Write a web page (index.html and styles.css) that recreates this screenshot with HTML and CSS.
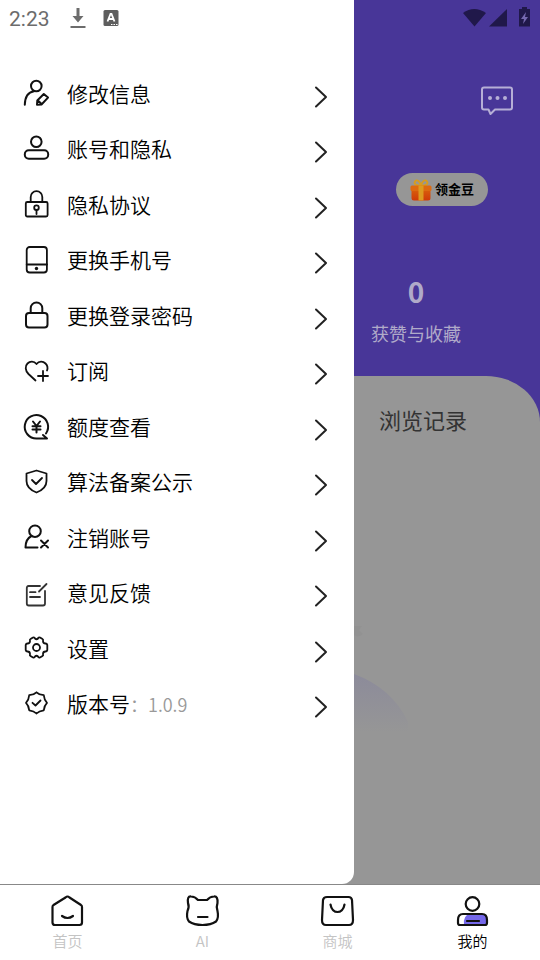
FILE: index.html
```html
<!DOCTYPE html>
<html lang="zh-CN">
<head>
<meta charset="utf-8">
<meta name="viewport" content="width=device-width, initial-scale=1">
<title>我的</title>
<link rel="stylesheet" href="styles.css">
</head>
<body>
<div class="stage">
  <main class="profile">
    <section class="hero">
      <div class="system">
        <svg width="70" height="22" viewBox="0 0 70 22" fill="#20184a"><path d="M0 5Q11-3 23 5L11.500 18.500Z"/><path d="M26 18.500L44 1V18.500Z"/><path d="M59-1h5v2h3v17.500H56V1h3Z"/><path d="M63 4l-5 7h3l-1 5 5-7h-3Z" fill="#7568b0"/></svg>
      </div>
      <button class="message" aria-label="消息">
        <svg width="32" height="30" viewBox="0 0 32 30" fill="none" stroke="#b6afd6" stroke-width="2" stroke-linejoin="round"><path d="M3 1.500H29Q31 1.500 31 3.500V21.500Q31 23.500 29 23.500H14L9.500 28 7.500 23.500H3Q1 23.500 1 21.500V3.500Q1 1.500 3 1.500Z"/><g fill="#b6afd6" stroke="none"><circle cx="9" cy="12" r="2"/><circle cx="16.500" cy="12" r="2"/><circle cx="24" cy="12" r="2"/></g></svg>
      </button>
      <button class="beans">
        <svg width="22" height="22" viewBox="0 0 22 22"><defs><linearGradient id="box" x2="0" y2="1"><stop stop-color="#d9600c"/><stop offset="1" stop-color="#cf3a08"/></linearGradient></defs><path d="M11 7C6 6.500 3.500 5 5 2.500S10 1.500 11 7C12 1.500 15.500 0 17 2.500S16 6.500 11 7" fill="none" stroke="#d99c1c" stroke-width="1.800"/><path d="M1.500 10H20.500V19Q20.500 21.500 18 21.500H4Q1.500 21.500 1.500 19Z" fill="url(#box)"/><rect x=".5" y="6.500" width="21" height="5.500" rx="1.500" fill="#dd6a10"/><path d="M8.500 6.500h5v15h-5Z" fill="#dc9a20"/></svg>
        <span>领金豆</span>
      </button>
      <div class="stat"><strong>0</strong><span>获赞与收藏</span></div>
    </section>
    <section class="sheet">
      <h2>浏览记录</h2>
      <svg class="art" width="56" height="106" viewBox="0 0 56 106"><defs><linearGradient id="hill" x2="0" y2="1"><stop stop-color="#8c8b9a"/><stop offset="1" stop-color="#969696"/></linearGradient></defs><path d="M0 0H8L5 4 9 8Q4 12 0 9Z" fill="#929292"/><path d="M0 48Q38 62 54 96V106H0Z" fill="url(#hill)"/></svg>
    </section>
  </main>

  <aside class="drawer">
    <div class="clock">
      <time>2:23</time>
      <svg width="16" height="22" viewBox="0 0 16 22" fill="#6c6c6c"><path d="M6.500 0h3v8h4L8 14.500 2.500 8h4Z"/><path d="M.5 18h15v2H.5Z"/></svg>
      <svg width="16" height="18" viewBox="0 0 16 18"><rect x=".5" y="0" width="15" height="16" rx="1.500" fill="#5e5e5e"/><path d="M4.500 11.500L7.500 4h1L11.500 11.500M5.500 9h5" fill="none" stroke="#fff" stroke-width="1.800"/><path d="M8 14.500h1.500M10.500 14.500H12M13 14.500h1.500" stroke="#fff"/></svg>
    </div>
    <nav class="menu">
      <a href="#edit"><svg class="icon" viewBox="0 0 30 30"><circle cx="15.300" cy="6" r="5.300"/><path d="M3.800 24.800C4 17 7.500 12 13 11.200M16 24.800L16.300 20.500 22.800 14 27 17.600 20.500 24.500ZM17 20.500l3.500 3.500"/></svg><span>修改信息</span><svg class="chevron" viewBox="0 0 14 22"><path d="M2 1.500L12 11 2 20.500"/></svg></a>
      <a href="#privacy"><svg class="icon" viewBox="0 0 30 30"><circle cx="15.300" cy="6.700" r="5.300"/><rect x="3.800" y="15.200" width="23.400" height="8.600" rx="4"/></svg><span>账号和隐私</span><svg class="chevron" viewBox="0 0 14 22"><path d="M2 1.500L12 11 2 20.500"/></svg></a>
      <a href="#agreement"><svg class="icon fine" viewBox="0 0 30 30"><rect x="4.800" y="11" width="21.800" height="14.500" rx="1.500"/><path d="M9.700 11V6a5.800 5.800 0 0 1 11.600 0V11M15.500 19v4"/><circle cx="15.500" cy="16.700" r="2.300"/></svg><span>隐私协议</span><svg class="chevron" viewBox="0 0 14 22"><path d="M2 1.500L12 11 2 20.500"/></svg></a>
      <a href="#phone"><svg class="icon fine" viewBox="0 0 30 30"><rect x="5.700" y="1" width="20.200" height="25.500" rx="3"/><path d="M5.700 18.500H26"/><circle cx="15.500" cy="22.500" r="1.700" class="solid"/></svg><span>更换手机号</span><svg class="chevron" viewBox="0 0 14 22"><path d="M2 1.500L12 11 2 20.500"/></svg></a>
      <a href="#password"><svg class="icon" viewBox="0 0 30 30"><rect x="5" y="11" width="21.500" height="14.500" rx="3"/><path d="M9.700 11V6.200a5.800 5.800 0 0 1 11.600 0V11"/></svg><span>更换登录密码</span><svg class="chevron" viewBox="0 0 14 22"><path d="M2 1.500L12 11 2 20.500"/></svg></a>
      <a href="#subscribe"><svg class="icon fine" viewBox="0 0 30 30"><path d="M14.500 23.500L7.500 17C4 13.500 4 9 6.500 6.500S13 4 15.500 7C18 4 22 4 24.500 6.500 26.500 8.500 27 11 26 13.500M22 14v10M17 19h10"/></svg><span>订阅</span><svg class="chevron" viewBox="0 0 14 22"><path d="M2 1.500L12 11 2 20.500"/></svg></a>
      <a href="#quota"><svg class="icon" viewBox="0 0 30 30"><path d="M25 20.500A11.700 11.700 0 1 0 15.500 25.500H26L22 22M12 8.500L15.500 13 19 8.500M15.500 13v6.500M11.500 13.200h8M11.500 16.500h8"/></svg><span>额度查看</span><svg class="chevron" viewBox="0 0 14 22"><path d="M2 1.500L12 11 2 20.500"/></svg></a>
      <a href="#algorithm"><svg class="icon fine" viewBox="0 0 30 30"><path d="M15.500 2.500L25.500 5.500V13C25.500 18 22 22 15.500 24.500 9 22 5.500 18 5.500 13V5.500ZM11 12l4 4 6-6"/></svg><span>算法备案公示</span><svg class="chevron" viewBox="0 0 14 22"><path d="M2 1.500L12 11 2 20.500"/></svg></a>
      <a href="#cancel"><svg class="icon" viewBox="0 0 30 30"><circle cx="14" cy="7.200" r="5.800"/><path d="M10.500 12C6.500 14 4.500 18 4.500 23.500H16.500M20 16.500l7 7M27 16.500l-7 7"/></svg><span>注销账号</span><svg class="chevron" viewBox="0 0 14 22"><path d="M2 1.500L12 11 2 20.500"/></svg></a>
      <a href="#feedback"><svg class="icon fine soft" viewBox="0 0 30 30"><path d="M19 7H7.500Q5.800 7 5.800 9V24.500Q5.800 26.500 7.800 26.500H22Q24 26.500 24 24.500V12M25.500 5L18 12.500M9 13.200h5.500M9 18h10"/></svg><span>意见反馈</span><svg class="chevron" viewBox="0 0 14 22"><path d="M2 1.500L12 11 2 20.500"/></svg></a>
      <a href="#settings"><svg class="icon fine" viewBox="0 0 30 30"><path d="M12 2.500Q13.500 2 14 3.500Q15.500 5 17 3.500Q17.500 2 19 2.500L21.500 4Q22.500 4.500 22 6Q22 8.500 24.500 8.500Q26 8.500 26.300 10V15Q26 16.500 24.500 16.500Q22 16.500 22 19Q22.500 20.500 21.500 21L19 22.500Q17.500 23 17 21.500Q15.500 20 14 21.500Q13.500 23 12 22.500L9.500 21Q8.500 20.500 9 19Q9 16.500 6.500 16.500Q5 16.500 4.700 15V10Q5 8.500 6.500 8.500Q9 8.500 9 6Q8.500 4.500 9.500 4Z"/><circle cx="15.500" cy="12.500" r="3.500"/></svg><span>设置</span><svg class="chevron" viewBox="0 0 14 22"><path d="M2 1.500L12 11 2 20.500"/></svg></a>
      <a href="#version"><svg class="icon fine" viewBox="0 0 30 30"><path d="M15.500 2.300Q18 4.800 22.800 5.200Q23.200 10 26 12.800Q23.200 15.500 22.800 20.300Q18 20.800 15.500 23.500Q13 20.800 8.200 20.300Q7.800 15.500 5 12.800Q7.800 10 8.200 5.200Q13 4.800 15.500 2.300ZM11.500 12.800l3 2.700 5-5"/></svg><span>版本号<small>：1.0.9</small></span><svg class="chevron" viewBox="0 0 14 22"><path d="M2 1.500L12 11 2 20.500"/></svg></a>
    </nav>
  </aside>
</div>

<nav class="tabs">
  <a href="#home"><svg viewBox="0 0 36 34"><path d="M17.500 2.500Q18.500 2.500 19.500 3.500L31 11Q32 11.500 32 13V28.500Q32 31 29.500 31H5Q2.500 31 2.500 28.500V13Q2.500 11.500 3.500 11L15.500 3.500Q16.500 2.500 17.500 2.500ZM12 22Q17.500 26 23 22"/></svg><span>首页</span></a>
  <a href="#ai"><svg viewBox="0 0 36 34"><path d="M3 9Q2 2 6 2.500Q10 2.500 13 6H22Q25 2.500 29 2.500Q33 2 32.500 9Q31 13 32.500 17Q34 24 31 27.500Q26 31 17.500 31T4 27.500Q1 24 2.500 17Q4.500 13 3 9ZM13 23H22.500"/></svg><span>AI</span></a>
  <a href="#mall"><svg viewBox="0 0 36 34"><path d="M7 3H28.500Q31.500 3 32 6L33 26Q33 31 29 31H6Q2 31 2 26L3 6Q3.500 3 7 3ZM10.500 10.500C12 20.500 23 20.500 24.500 10.500"/></svg><span>商城</span></a>
  <a href="#me" class="current" aria-current="page"><svg viewBox="0 0 36 34"><path d="M9 31Q8 21 15 20H29Q32 21 32 25V31Z" fill="#7568ea" stroke="none"/><circle cx="17.500" cy="10" r="6.800"/><path d="M8 20H27Q32 20 32 26V29Q32 31 30 31H5Q3 31 3 29V26Q3 20 8 20ZM12 27H24"/></svg><span>我的</span></a>
</nav>
</body>
</html>
```
FILE: styles.css
```css
* { box-sizing: border-box; }

body {
  margin: 0;
  min-height: 100vh;
  display: flex;
  flex-direction: column;
  background: #fff;
  color: #000;
  font-family: "Noto Sans CJK SC", sans-serif;
}

a { color: inherit; text-decoration: none; }
button { border: 0; padding: 0; background: none; font: inherit; color: inherit; }
svg { display: block; flex: none; overflow: visible; }

.stage {
  flex: 1;
  display: grid;
  grid-template-columns: minmax(0, 1fr);
}

.profile, .drawer { grid-area: 1 / 1; }

.profile {
  display: flex;
  flex-direction: column;
  background: #483698;
}

.hero {
  height: 376px;
  padding-left: 354px;
  display: flex;
  flex-direction: column;
}

.system {
  display: flex;
  justify-content: flex-end;
  padding: 8px 7px 0 0;
}

.message {
  align-self: flex-end;
  margin: 56px 27px 0 0;
}

.beans {
  display: flex;
  align-items: center;
  justify-content: center;
  gap: 3px;
  width: 92px;
  height: 33px;
  margin: 57px 0 0 42px;
  border-radius: 17px;
  background: #969696;
  font-size: 13px;
  line-height: 18px;
  font-weight: 700;
}

.beans span { margin-bottom: 2px; }

.stat {
  display: flex;
  flex-direction: column;
  align-items: center;
  width: 124px;
  margin-top: 65px;
  color: #b0aac9;
  font-size: 18px;
  line-height: 26px;
}

.stat strong {
  font-size: 28px;
  line-height: 40px;
  font-weight: 700;
  margin-bottom: 9px;
}

.sheet {
  flex: 1;
  padding-left: 354px;
  border-radius: 0 54px 0 0 / 0 46px 0 0;
  background: #969696;
}

.sheet h2 {
  margin: 26px 0 0 25px;
  color: #333;
  font-size: 22px;
  line-height: 34px;
  font-weight: 400;
}

.art { margin-top: 190px; }

.drawer {
  width: 354px;
  background: #fff;
  border-radius: 0 0 12px 0;
}

.clock {
  display: flex;
  align-items: center;
  height: 37px;
  padding-left: 9px;
  gap: 17px;
  color: #6c6c6c;
  font: 400 21px/24px Roboto, sans-serif;
}

.clock time { margin-right: 3px; }

.menu {
  display: grid;
  grid-auto-rows: 1fr;
  height: 666px;
  margin-top: 30px;
  padding: 0 26px 0 21px;
}

.menu a {
  display: flex;
  align-items: center;
  font-size: 21px;
  line-height: 30px;
  font-weight: 350;
}

.menu span { flex: 1; margin: 0 0 4px 16px; }
.menu small { color: #999; font-size: 18px; }

.icon, .chevron {
  fill: none;
  stroke: #111;
  stroke-width: 2;
  stroke-linecap: round;
  stroke-linejoin: round;
}

.icon { width: 30px; height: 30px; }
.icon .solid { fill: #111; stroke: none; }
.fine { stroke-width: 1.8; }
.soft { stroke: #333; }

.chevron {
  width: 14px;
  height: 22px;
  margin-top: 4px;
  stroke: #222;
}

.tabs {
  display: grid;
  grid-template-columns: repeat(4, 1fr);
  height: 76px;
  border-top: 1px solid #888;
  background: #fff;
}

.tabs a {
  display: flex;
  flex-direction: column;
  align-items: center;
  padding-top: 9px;
  color: #c4c4c4;
  font-size: 15px;
  line-height: 22px;
  font-weight: 350;
}

.tabs svg {
  width: 36px;
  height: 34px;
  margin-bottom: 2px;
  fill: none;
  stroke: #111;
  stroke-width: 2.2;
  stroke-linecap: round;
  stroke-linejoin: round;
}

.tabs .current { color: #000; }
```
